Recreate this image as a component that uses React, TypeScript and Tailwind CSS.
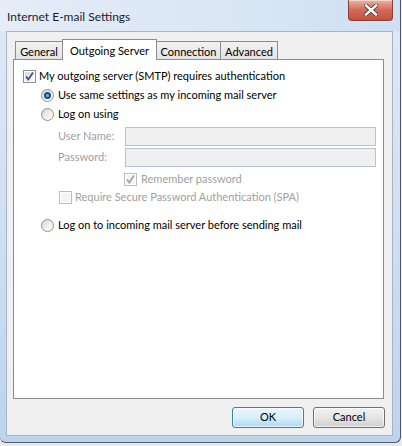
const FONT = "font-['Lato','Noto_Sans',sans-serif]";

function CheckBox({ checked, disabled }: { checked?: boolean; disabled?: boolean }) {
  return (
    <span
      className={`relative flex h-[13px] w-[13px] shrink-0 items-center justify-center border bg-white ${
        disabled ? "border-[#bcbcbc]" : "border-[#8e8f8f]"
      }`}
    >
      <span
        className={`h-[9px] w-[9px] ${
          disabled
            ? "bg-[#f4f4f4]"
            : "bg-gradient-to-br from-[#d6d6d6] via-[#ececec] to-[#fbfbfb]"
        }`}
      />
      {checked && (
        <svg className="absolute left-0 top-0" width="11" height="11" viewBox="0 0 11 11">
          <path
            d="M2 5.5 L4.3 8.4 L9 1.6"
            fill="none"
            stroke={disabled ? "#a4a4a4" : "#3d4f93"}
            strokeWidth="1.8"
          />
        </svg>
      )}
    </span>
  );
}

function Radio({ checked }: { checked?: boolean }) {
  return (
    <span className="flex h-[13px] w-[13px] shrink-0 items-center justify-center rounded-full border border-[#8f8f8f] bg-gradient-to-br from-[#d4d4d4] via-[#eeeeee] to-[#ffffff]">
      {checked && (
        <span className="flex h-[7px] w-[7px] items-center justify-center rounded-full bg-[#1c4f8a]">
          <span className="h-[3px] w-[3px] rounded-full bg-[#5fc2f2]" />
        </span>
      )}
    </span>
  );
}

function Tab({ label, active, w, first }: { label: string; active?: boolean; w: string; first?: boolean }) {
  if (active) {
    return (
      <div
        className={`${w} relative z-10 -mb-px flex h-[21px] items-start justify-center border border-b-0 border-[#898c95] bg-white pt-[3px] text-black`}
      >
        {label}
      </div>
    );
  }
  return (
    <div
      className={`${w} ${first ? "" : "-ml-px"} flex h-[18px] items-start justify-center border border-b-0 border-[#898c95] bg-gradient-to-b from-[#f2f2f2] to-[#e3e3e3] pt-[2px] text-black`}
    >
      {label}
    </div>
  );
}

export default function App() {
  return (
    <div className={`${FONT} relative h-[446px] w-[402px] overflow-hidden bg-[#e9e9e9]`}>
      <div className="flex h-[443px] w-[401px] flex-col rounded-b-[6px] border-b border-r border-[#525c69] bg-gradient-to-b from-[#dfeaf6] via-[#cfe0f2] to-[#bcd4ee]">
        {/* title bar */}
        <div className="flex h-[31px] shrink-0 items-start justify-between bg-gradient-to-r from-[#e4edf8] via-[#dbe7f4] to-[#cfe0f3]">
          <span className="pl-[7px] pt-[8px] text-[12px] text-[#1b1b2e]">Internet E-mail Settings</span>
          <div className="mr-[7px] flex h-[21px] w-[45px] items-center justify-center rounded-b-[4px] border border-t-0 border-[#8b3f33] bg-gradient-to-b from-[#eab2a6] via-[#d36a56] to-[#c4503c] shadow-[inset_0_1px_0_rgba(255,255,255,0.5)]">
            <svg width="14" height="12" viewBox="0 0 14 12">
              <path d="M2 1.5 L12 10.5 M12 1.5 L2 10.5" stroke="#4a3f3f" strokeWidth="4.2" strokeLinecap="square" />
              <path d="M2 1.5 L12 10.5 M12 1.5 L2 10.5" stroke="#ffffff" strokeWidth="2.4" strokeLinecap="square" />
            </svg>
          </div>
        </div>

        {/* client area */}
        <div className="ml-[6px] mr-[7px] flex h-[405px] flex-col border border-[#a5b4c6] bg-[#f0f0f0] text-[11px]">
          <div className="ml-[6px] mr-[8px] mt-[7px] flex flex-col">
            {/* tabs */}
            <div className="flex items-end pl-[2px]">
              <Tab label="General" w="w-[48px]" first />
              <Tab label="Outgoing Server" w="w-[95px] -ml-px" active />
              <Tab label="Connection" w="w-[65px] -ml-px" />
              <Tab label="Advanced" w="w-[58px]" />
            </div>

            {/* panel */}
            <div className="flex h-[340px] flex-col border border-[#898c95] bg-white pl-[9px] pt-[7px] text-black">
              <div className="flex h-[19px] items-center gap-[3px]">
                <CheckBox checked />
                <span>My outgoing server (SMTP) requires authentication</span>
              </div>
              <div className="flex h-[19px] items-center gap-[4px] pl-[18px]">
                <Radio checked />
                <span>Use same settings as my incoming mail server</span>
              </div>
              <div className="flex h-[19px] items-center gap-[4px] pl-[18px]">
                <Radio />
                <span>Log on using</span>
              </div>

              <div className="mt-[3px] flex h-[19px] items-center pl-[35px] text-[#a0a0a0]">
                <span className="w-[67px]">User Name:</span>
                <div className="h-[19px] w-[251px] border border-[#b5c3d2] bg-[#f0f0f0]" />
              </div>
              <div className="mt-[2px] flex h-[19px] items-center pl-[35px] text-[#a0a0a0]">
                <span className="w-[67px]">Password:</span>
                <div className="h-[19px] w-[251px] border border-[#b5c3d2] bg-[#f0f0f0]" />
              </div>

              <div className="mt-[3px] flex h-[18px] items-center gap-[4px] pl-[101px] text-[#a0a0a0]">
                <CheckBox checked disabled />
                <span>Remember password</span>
              </div>
              <div className="flex h-[18px] items-center gap-[3px] pl-[36px] text-[#a0a0a0]">
                <CheckBox disabled />
                <span>Require Secure Password Authentication (SPA)</span>
              </div>

              <div className="mt-[10px] flex h-[18px] items-center gap-[4px] pl-[18px]">
                <Radio />
                <span>Log on to incoming mail server before sending mail</span>
              </div>
            </div>

            {/* buttons */}
            <div className="-mr-px mt-[8px] flex justify-end gap-[9px]">
              <button className="flex h-[21px] w-[72px] items-center justify-center rounded-[3px] border border-[#3c7fb1] bg-gradient-to-b from-[#eaf6fd] via-[#d9f0fc] to-[#a7d9f5] text-black shadow-[inset_0_0_0_1px_rgba(255,255,255,0.7)]">
                OK
              </button>
              <button className="flex h-[21px] w-[72px] items-center justify-center rounded-[3px] border border-[#707070] bg-gradient-to-b from-[#f2f2f2] via-[#e6e6e6] to-[#cfcfcf] text-black shadow-[inset_0_0_0_1px_rgba(255,255,255,0.7)]">
                Cancel
              </button>
            </div>
          </div>
        </div>
      </div>
    </div>
  );
}
